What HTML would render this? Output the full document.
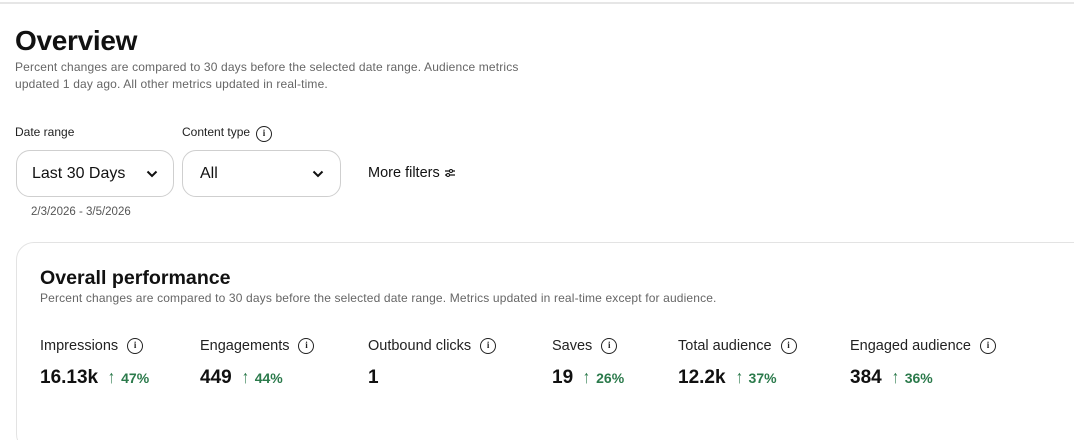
<!DOCTYPE html>
<html><head><meta charset="utf-8"><style>
*{margin:0;padding:0;box-sizing:border-box}
html,body{width:1074px;height:440px;overflow:hidden}
body{background:#fff;font-family:"Liberation Sans",sans-serif;color:#111;position:relative}
.a{position:absolute;white-space:nowrap}
.sub{font-size:12px;color:#666;line-height:17px;letter-spacing:0.15px}
.lbl{font-size:12px;color:#222}
.sel{position:absolute;top:150px;height:47px;border:1px solid #cfcfcf;border-radius:14px;font-size:16px;color:#111}
.sel span{position:absolute;left:15px;top:14px}
.sel svg{position:absolute;top:19px}
.info{display:inline-block;width:16px;height:16px;border:1.3px solid #222;border-radius:50%;font-size:9px;font-weight:bold;text-align:center;line-height:13px;vertical-align:-2px;margin-left:9px;font-family:"Liberation Serif",serif}
.m{position:absolute;top:338px;font-size:14.5px;color:#222;white-space:nowrap}
.m .info{position:relative;top:-4px}
.lbl .info{position:relative;top:-2px}
.v{position:absolute;top:367px;font-size:19px;font-weight:bold;white-space:nowrap;color:#111}
.v b{font-size:14px;color:#2b7a4b;margin-left:5px}
.v i{font-style:normal;font-weight:normal;font-size:18px;color:#2b7a4b;margin-left:9px;display:inline-block;transform:scaleX(0.8)}
</style></head><body>
<div class="a" style="left:0;top:2px;width:1074px;height:2px;background:#e6e6e6"></div>
<div class="a" style="left:15px;top:25px;font-size:28px;font-weight:bold;letter-spacing:-0.3px">Overview</div>
<div class="a sub" style="left:15px;top:59px">Percent changes are compared to 30 days before the selected date range. Audience metrics<br>updated 1 day ago. All other metrics updated in real-time.</div>
<div class="a lbl" style="left:15px;top:125px">Date range</div>
<div class="a lbl" style="left:182px;top:125px">Content type<span class="info" style="margin-left:6px">i</span></div>
<div class="sel" style="left:16px;width:158px"><span>Last 30 Days</span><svg style="left:129px" width="12" height="8" viewBox="0 0 12 8"><path d="M1.5 1.5L6 6l4.5-4.5" stroke="#111" stroke-width="2" fill="none"/></svg></div>
<div class="sel" style="left:182px;width:159px"><span style="left:17px">All</span><svg style="left:129px" width="12" height="8" viewBox="0 0 12 8"><path d="M1.5 1.5L6 6l4.5-4.5" stroke="#111" stroke-width="2" fill="none"/></svg></div>
<div class="a" style="left:368px;top:165px;font-size:14.5px">More filters <svg width="12" height="10" viewBox="0 0 12 10" style="vertical-align:-1px"><path d="M1 3h10M1 7h10" stroke="#111" stroke-width="1.2"/><circle cx="7" cy="3" r="1.5" fill="#fff" stroke="#111"/><circle cx="4" cy="7" r="1.5" fill="#fff" stroke="#111"/></svg></div>
<div class="a" style="left:31px;top:206px;font-size:11.5px;color:#555">2/3/2026 - 3/5/2026</div>
<div class="a" style="left:16px;top:242px;width:1080px;height:210px;border:1px solid #e3e3e3;border-radius:18px"></div>
<div class="a" style="left:40px;top:267px;font-size:19.6px;font-weight:bold">Overall performance</div>
<div class="a sub" style="left:40px;top:290px">Percent changes are compared to 30 days before the selected date range. Metrics updated in real-time except for audience.</div>
<div class="m" style="left:40px">Impressions<span class="info">i</span></div>
<div class="m" style="left:200px">Engagements<span class="info">i</span></div>
<div class="m" style="left:368px">Outbound clicks<span class="info">i</span></div>
<div class="m" style="left:552px">Saves<span class="info">i</span></div>
<div class="m" style="left:678px">Total audience<span class="info">i</span></div>
<div class="m" style="left:850px">Engaged audience<span class="info">i</span></div>
<div class="v" style="left:40px">16.13k<i>↑</i><b>47%</b></div>
<div class="v" style="left:200px">449<i>↑</i><b>44%</b></div>
<div class="v" style="left:368px">1</div>
<div class="v" style="left:552px">19<i>↑</i><b>26%</b></div>
<div class="v" style="left:678px">12.2k<i>↑</i><b>37%</b></div>
<div class="v" style="left:850px">384<i>↑</i><b>36%</b></div>
</body></html>
